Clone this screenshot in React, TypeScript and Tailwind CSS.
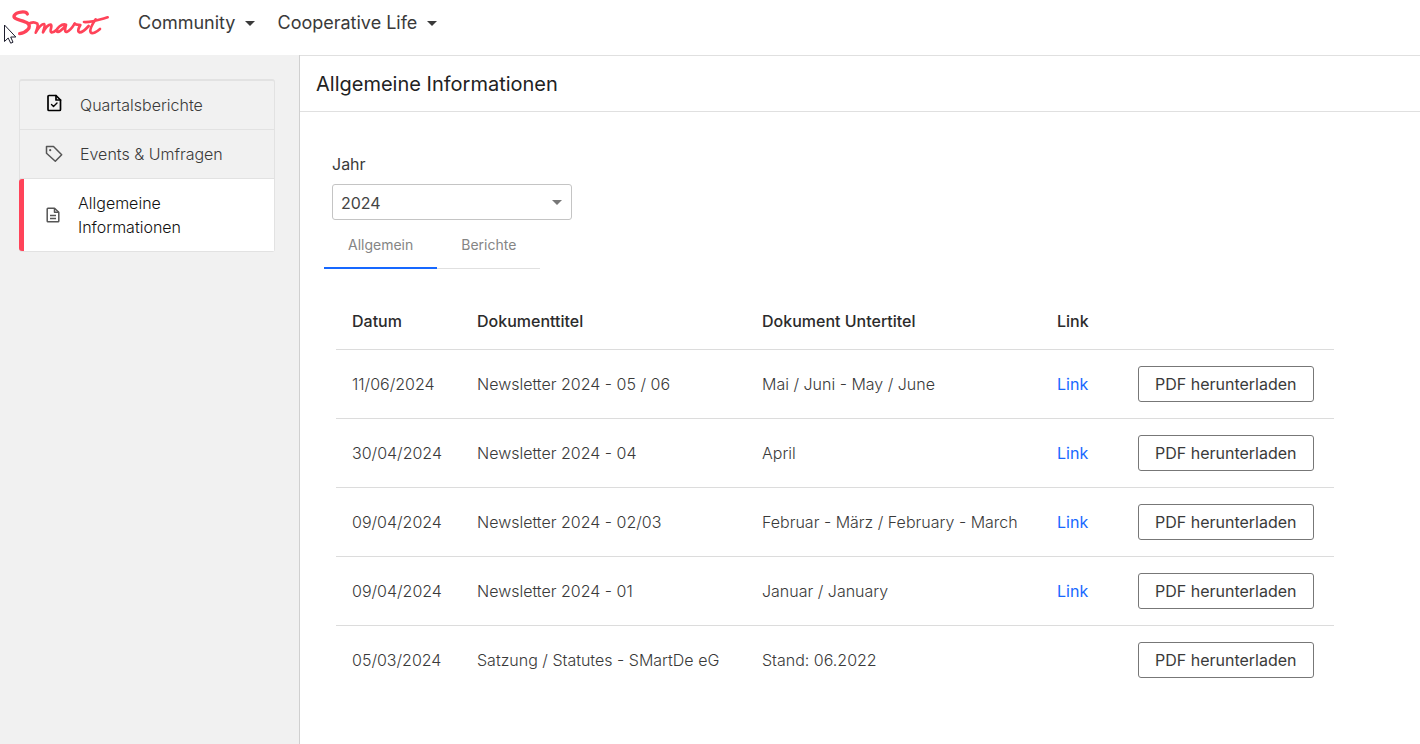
import { useState } from "react";

type Doc = { date: string; title: string; subtitle: string; link: boolean };

const docs: Doc[] = [
  { date: "11/06/2024", title: "Newsletter 2024 - 05 / 06", subtitle: "Mai / Juni - May / June", link: true },
  { date: "30/04/2024", title: "Newsletter 2024 - 04", subtitle: "April", link: true },
  { date: "09/04/2024", title: "Newsletter 2024 - 02/03", subtitle: "Februar - März / February - March", link: true },
  { date: "09/04/2024", title: "Newsletter 2024 - 01", subtitle: "Januar / January", link: true },
  { date: "05/03/2024", title: "Satzung / Statutes - SMartDe eG", subtitle: "Stand: 06.2022", link: false },
];

function Logo() {
  return (
    <svg
      viewBox="0 0 306 90"
      className="h-[30px] w-[102px]"
      fill="none"
      stroke="#ff4359"
      strokeLinecap="round"
      strokeLinejoin="round"
      aria-hidden="true"
    >
      <path strokeWidth="10" d="M52 18C48 8 20 11 13 22C6 36 40 35 54 46C66 58 48 74 29 77" />
      <path strokeWidth="8" d="M54 48C64 42 74 41 82 47C86 54 80 66 77 74C85 60 93 48 102 48C107 50 101 64 99 73C106 60 115 49 123 50C128 54 117 70 124 73C130 74 135 70 139 66" />
      <path strokeWidth="8" d="M168 50C155 46 140 60 140 69C142 77 158 66 168 51C165 62 163 73 170 72C178 69 188 57 194 47" />
      <path strokeWidth="8" d="M194 47C198 52 207 50 211 51C207 58 201 70 208 73C216 74 228 63 236 54" />
      <path strokeWidth="8" d="M257 34C248 47 237 64 242 73C247 79 261 71 270 63M222 42C242 44 268 35 293 28" />
    </svg>
  );
}

function Caret({ className }: { className: string }) {
  return (
    <svg viewBox="0 0 10 5" className={className} fill="currentColor" aria-hidden="true">
      <path d="M0 0H10L5 5Z" />
    </svg>
  );
}

function FileCheckIcon() {
  return (
    <svg viewBox="0 0 16 18" className="mb-1 h-[18px] w-4 text-black" fill="none" stroke="currentColor" strokeWidth="1.7" strokeLinejoin="round" strokeLinecap="round" aria-hidden="true">
      <path d="M10 1.5H3A1 1 0 0 0 2 2.5V15.5A1 1 0 0 0 3 16.5H13.5A1 1 0 0 0 14.5 15.5V6Z" />
      <path d="M10 1.5V6H14.5" />
      <path d="M5.5 10.5L7.5 12.5L11 9" strokeWidth="1.4" />
    </svg>
  );
}

function TagIcon() {
  return (
    <svg viewBox="0 0 18 18" className="size-[18px] text-[#555]" fill="none" stroke="currentColor" strokeWidth="1.5" strokeLinejoin="round" aria-hidden="true">
      <path d="M1.5 1.5H8.5L16.7 9.8L10.3 16.3L1.5 8.3Z" />
      <circle cx="5.2" cy="5.2" r="1.1" fill="currentColor" stroke="none" />
    </svg>
  );
}

function FileTextIcon() {
  return (
    <svg viewBox="0 0 14 16" className="h-4 w-[14px] text-[#555]" fill="none" stroke="currentColor" strokeWidth="1.5" strokeLinejoin="round" aria-hidden="true">
      <path d="M8.5 1.2H2A1 1 0 0 0 1.2 2V14A1 1 0 0 0 2 14.8H12A1 1 0 0 0 12.8 14V5.3Z" />
      <path d="M8.5 1.2V5.3H12.8M4 8.5H10M4 11.5H10" />
    </svg>
  );
}

function Pointer() {
  return (
    <svg viewBox="0 0 13 20" className="absolute left-1 top-6 h-5 w-[13px]" fill="#fff" stroke="#1c1c2c" strokeWidth="1" aria-hidden="true">
      <path d="M.5 1V17.5L4.2 14L6.7 19.2L9 18.2L6.7 13H11.8Z" />
    </svg>
  );
}

export default function App() {
  const [tab, setTab] = useState("Allgemein");
  const tabBase = "h-[46px] cursor-pointer px-6 text-sm font-normal text-[#858585] border-b-2 -mb-[1px]";
  return (
    <div className="flex min-h-screen flex-col bg-white font-['Inter',sans-serif] text-base text-[#3a3a3a]">
      <header className="relative flex h-[55px] items-start pl-[10px] pt-2">
        <a href="#home" aria-label="Smart">
          <Logo />
        </a>
        <nav className="ml-[26px] flex gap-[22px] pt-[1px] text-lg">
          <button type="button" className="flex cursor-pointer items-center gap-[10px]">
            Community <Caret className="h-[5px] w-[10px]" />
          </button>
          <button type="button" className="flex cursor-pointer items-center gap-[10px]">
            Cooperative Life <Caret className="h-[5px] w-[10px]" />
          </button>
        </nav>
        <Pointer />
      </header>

      <div className="flex flex-1">
        <aside className="w-[300px] shrink-0 border-r border-[#d0d0d0] bg-[#f1f1f1] pl-[19px] pr-6 pt-6">
          <nav className="flex flex-col rounded-[3px] border border-t-2 border-[#e2e2e2] font-light">
            <a href="#quartalsberichte" className="flex items-center border-b border-[#e2e2e2] py-3 pl-[26px]">
              <FileCheckIcon />
              <span className="ml-[18px]">Quartalsberichte</span>
            </a>
            <a href="#events" className="flex items-center border-b border-[#e2e2e2] py-3 pl-[25px]">
              <TagIcon />
              <span className="ml-[17px]">Events &amp; Umfragen</span>
            </a>
            <a href="#allgemein" aria-current="page" className="-ml-[1px] flex items-center rounded-l-[3px] border-l-[5px] border-[#ff4359] bg-white py-3 pl-[22px] text-[#111]">
              <FileTextIcon />
              <span className="ml-[18px] w-32">Allgemeine Informationen</span>
            </a>
          </nav>
        </aside>

        <main className="min-w-0 flex-1 border-t border-[#e0e0e0]">
          <h1 className="border-b border-[#e0e0e0] px-4 pb-3 pt-[14px] text-xl leading-[29px] text-[#222]">
            Allgemeine Informationen
          </h1>

          <div className="px-6 pt-10">
            <div className="box-content flex w-[240px] flex-col pl-2">
              <label htmlFor="jahr" className="mb-2 leading-6">Jahr</label>
              <div className="relative flex items-center">
                <select id="jahr" defaultValue="2024" className="h-9 w-full appearance-none rounded-[3px] border border-[#c4c4c4] bg-white px-2 pt-[1px] text-[#444]">
                  <option>2024</option>
                  <option>2023</option>
                </select>
                <Caret className="pointer-events-none absolute right-[10px] h-[5px] w-[10px] text-[#777]" />
              </div>
            </div>

            <div className="flex pt-[3px]">
              <div role="tablist" className="flex border-b border-[#e0e0e0]">
                {["Allgemein", "Berichte"].map((name) => (
                  <button
                    key={name}
                    type="button"
                    role="tab"
                    aria-selected={tab === name}
                    onClick={() => setTab(name)}
                    className={`${tabBase} ${tab === name ? "border-[#1768ff]" : "border-transparent"}`}
                  >
                    {name}
                  </button>
                ))}
              </div>
            </div>

            <div className="px-3 pt-6">
              <table className="w-full max-w-[998px] table-fixed border-collapse text-left">
                <colgroup>
                  <col className="w-[125px]" />
                  <col className="w-[285px]" />
                  <col className="w-[295px]" />
                  <col className="w-[81px]" />
                  <col />
                </colgroup>
                <thead>
                  <tr className="h-14 border-b border-[#dcdcdc] text-[#2b2b2b]">
                    <th className="px-4 font-medium">Datum</th>
                    <th className="px-4 font-medium">Dokumenttitel</th>
                    <th className="px-4 font-medium">Dokument Untertitel</th>
                    <th className="px-4 font-medium">Link</th>
                    <td />
                  </tr>
                </thead>
                <tbody>
                  {docs.map((doc) => (
                    <tr key={doc.title} className="h-[69px] border-b border-[#dcdcdc] font-light last:border-b-0">
                      <td className="px-4">{doc.date}</td>
                      <td className="px-4">{doc.title}</td>
                      <td className="whitespace-nowrap px-4">{doc.subtitle}</td>
                      <td className="px-4">
                        {doc.link && <a href="#link" className="font-normal text-[#1768ff]">Link</a>}
                      </td>
                      <td className="px-4">
                        <button type="button" className="h-9 cursor-pointer whitespace-nowrap rounded-[3px] border border-[#777] px-4 font-normal">
                          PDF herunterladen
                        </button>
                      </td>
                    </tr>
                  ))}
                </tbody>
              </table>
            </div>
          </div>
        </main>
      </div>
    </div>
  );
}
